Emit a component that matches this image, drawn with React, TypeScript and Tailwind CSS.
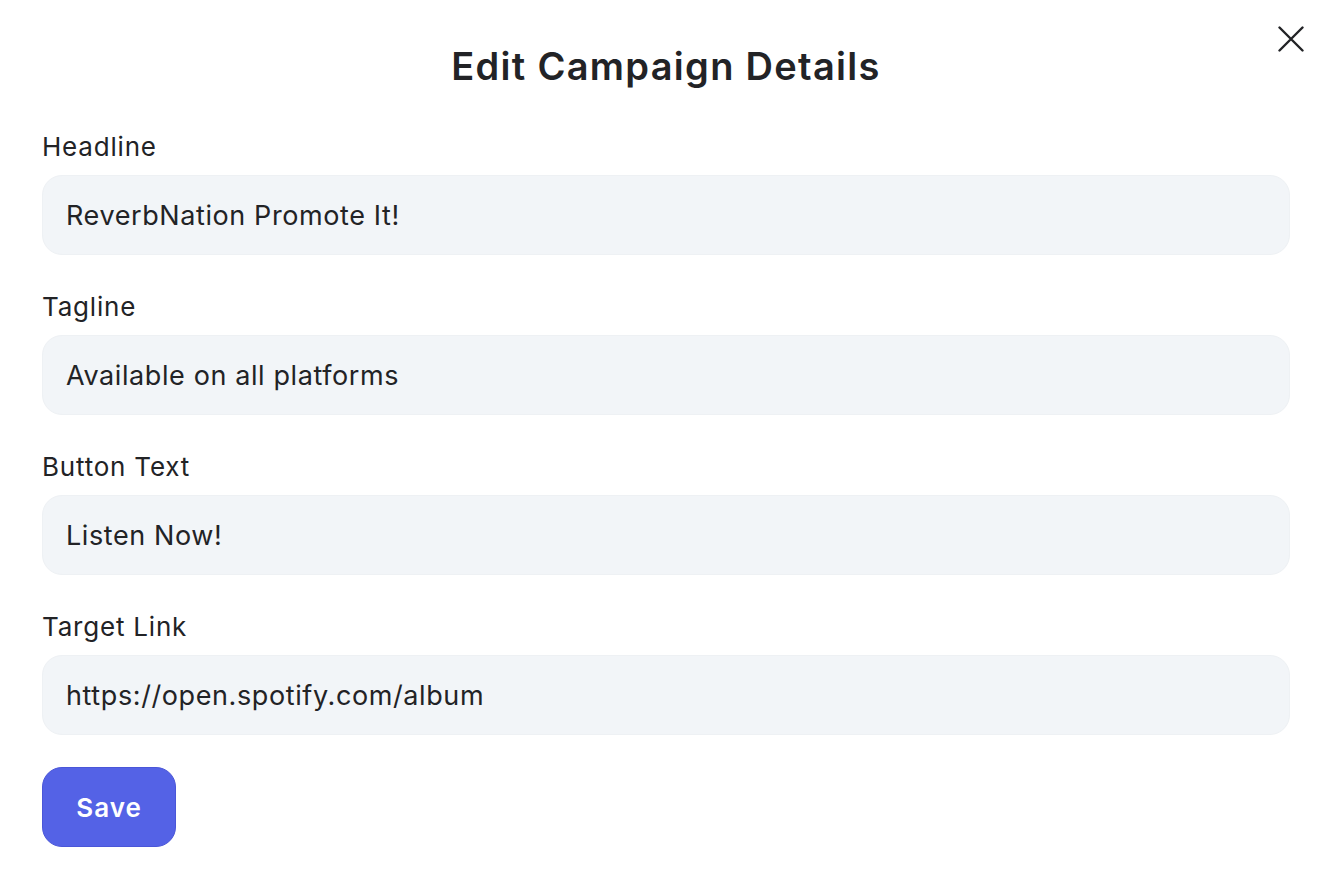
const fields = [
  { label: "Headline", value: "ReverbNation Promote It!" },
  { label: "Tagline", value: "Available on all platforms" },
  { label: "Button Text", value: "Listen Now!" },
  { label: "Target Link", value: "https://open.spotify.com/album" },
];

export default function App() {
  return (
    <div
      className="relative min-h-screen bg-white text-[#222326] pl-[42px] pr-[44px]"
      style={{ fontFamily: "Inter, 'Noto Sans', sans-serif" }}
    >
      {/* Close button */}
      <button className="absolute top-[26px] right-[30px] text-[#222326]">
        <svg width="26" height="26" viewBox="0 0 26 26" fill="none" stroke="currentColor" strokeWidth="2.4" strokeLinecap="round">
          <path d="M1.5 1.5 L24.5 24.5 M24.5 1.5 L1.5 24.5" />
        </svg>
      </button>

      <h1 className="pt-[40px] text-center text-[38px] leading-[52px] font-semibold tracking-[1.3px]">
        Edit Campaign Details
      </h1>

      <div className="mt-[39px] flex flex-col gap-[36px]">
        {fields.map((f) => (
          <div key={f.label} className="flex flex-col">
            <label className="text-[26px] leading-[32px] mb-[12px] tracking-[0.8px] text-[#222326]">
              {f.label}
            </label>
            <input
              defaultValue={f.value}
              className="h-[80px] w-full rounded-[20px] border border-[#eef1f4] bg-[#f2f5f8] px-[23px] text-[27px] tracking-[0.6px] text-[#222326] outline-none"
            />
          </div>
        ))}
      </div>

      <button className="mt-[32px] h-[80px] w-[134px] rounded-[20px] border border-[#4a56d8] bg-[#5462e6] text-[26px] font-semibold tracking-[1px] text-white">
        Save
      </button>
    </div>
  );
}
